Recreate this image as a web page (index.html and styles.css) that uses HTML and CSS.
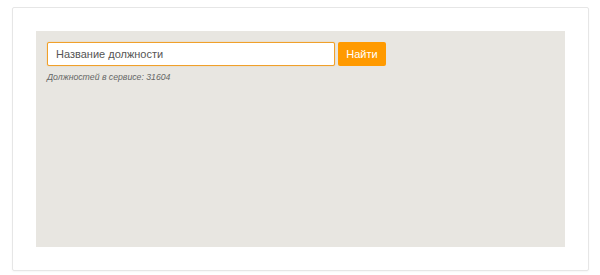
FILE: index.html
```html
<!DOCTYPE html>
<html lang="ru">
<head>
  <meta charset="UTF-8">
  <meta name="viewport" content="width=device-width, initial-scale=1.0">
  <title>Поиск должностей</title>
  <link rel="stylesheet" href="styles.css">
</head>
<body>
  <div class="frame">
    <div class="search-box">
      <form class="search-form">
        <input type="text" class="search-input" placeholder="Название должности">
        <button type="button" class="search-button">Найти</button>
      </form>
      <p class="search-count">Должностей в сервисе: 31604</p>
    </div>
  </div>
</body>
</html>
```

FILE: styles.css
```css
    body {
      margin: 0;
      padding: 7px 11px 4px 12px;
      font-family: "Liberation Sans", Arial, sans-serif;
      background-color: #fff;
    }
    .frame {
      border: 1px solid #e6e6e6;
      border-radius: 2px;
      padding: 23px;
      height: 216px;
      box-shadow: 0 1px 2px rgba(0, 0, 0, 0.04);
    }
    .search-box {
      background-color: #e8e6e1;
      height: 100%;
      padding: 11px;
      box-sizing: border-box;
    }
    .search-form {
      display: flex;
      gap: 3px;
      margin: 0;
    }
    .search-input {
      width: 288px;
      height: 24px;
      box-sizing: border-box;
      border: 1px solid #f0a02a;
      border-radius: 2px;
      padding: 0 8px;
      font-family: inherit;
      font-size: 11px;
      color: #333;
      background-color: #fff;
      box-shadow: 0 0 1px #f5b040;
      outline: none;
    }
    .search-input::placeholder {
      color: #555;
      opacity: 1;
    }
    .search-button {
      width: 48px;
      height: 24px;
      border: none;
      border-radius: 2px;
      background-color: #ff9a00;
      color: #fff;
      font-family: inherit;
      font-size: 11px;
      padding: 0;
      cursor: pointer;
    }
    .search-count {
      margin: 6px 0 0;
      font-size: 8.7px;
      font-style: italic;
      color: #666;
    }
```
